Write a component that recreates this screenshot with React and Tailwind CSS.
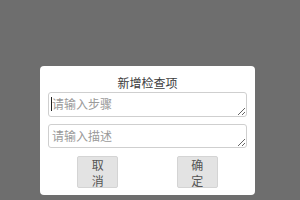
export default function App() {
  const font = { fontFamily: '"Noto Sans CJK SC", "Noto Sans", sans-serif' };
  return (
    <div className="w-[300px] h-[200px] bg-[#6e6e6e] overflow-hidden pt-[66px] pl-[40px]" style={font}>
      <div className="w-[215px] h-[129px] bg-white rounded-[4px] px-[8px] pt-[8px] flex flex-col">
        <div className="text-center text-[12px] leading-[17px] text-[#3c3c3c] h-[18px]">新增检查项</div>
        <div className="relative">
          <textarea
            placeholder="请输入步骤"
            className="block w-[199px] h-[25px] border border-[#cfcfcf] rounded-[3px] px-[3px] py-[3px] text-[12px] leading-[16px] text-[#333] placeholder:text-[#9a9a9a] outline-none resize-y"
            style={font}
          />
          <span className="absolute left-[3px] top-[5px] w-px h-[14px] bg-[#222]" />
        </div>
        <textarea
          placeholder="请输入描述"
          className="mt-[7px] block w-[199px] h-[24px] border border-[#cfcfcf] rounded-[3px] px-[3px] py-[3px] text-[12px] leading-[16px] text-[#333] placeholder:text-[#9a9a9a] outline-none resize-y"
          style={font}
        />
        <div className="flex mt-[8px]">
          <div className="flex-1 flex justify-center">
            <button className="w-[41px] h-[32px] bg-[#e3e3e3] border border-[#d4d4d4] rounded-[2px] text-[12px] leading-[16px] text-[#555] px-[8px] break-all" style={font}>取消</button>
          </div>
          <div className="flex-1 flex justify-center">
            <button className="w-[41px] h-[32px] bg-[#e3e3e3] border border-[#d4d4d4] rounded-[2px] text-[12px] leading-[16px] text-[#555] px-[8px] break-all" style={font}>确定</button>
          </div>
        </div>
      </div>
    </div>
  );
}
